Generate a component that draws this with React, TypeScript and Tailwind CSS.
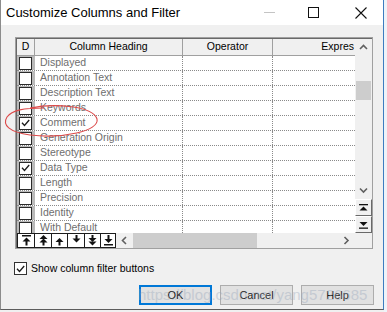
import React from 'react';

const rows: [string, boolean][] = [
  ['Displayed', false],
  ['Annotation Text', false],
  ['Description Text', false],
  ['Keywords', false],
  ['Comment', true],
  ['Generation Origin', false],
  ['Stereotype', false],
  ['Data Type', true],
  ['Length', false],
  ['Precision', false],
  ['Identity', false],
  ['With Default', false],
];

function Tick() {
  return (
    <svg width="9" height="8" viewBox="0 0 9 8">
      <path d="M1 3.8 L3.5 6.5 L8.2 1" stroke="#1a1a1a" strokeWidth="1.3" fill="none" />
    </svg>
  );
}

function Chevron({ dir }: { dir: 'up' | 'down' | 'left' | 'right' }) {
  const d = {
    up: 'M1 5 L4.5 1.5 L8 5',
    down: 'M1 1.5 L4.5 5 L8 1.5',
    left: 'M5 1 L1.5 4.5 L5 8',
    right: 'M1.5 1 L5 4.5 L1.5 8',
  }[dir];
  const vert = dir === 'up' || dir === 'down';
  return (
    <svg width={vert ? 9 : 7} height={vert ? 7 : 9} viewBox={vert ? '0 0 9 7' : '0 0 7 9'}>
      <path d={d} stroke="#606060" strokeWidth="1.6" fill="none" />
    </svg>
  );
}

// toolbar arrows: top, double up, up, down, double down, bottom
function MoveIcon({ kind }: { kind: number }) {
  const shapes: Record<number, React.ReactNode> = {
    0: (
      <>
        <rect x="0" y="0" width="9" height="1.5" />
        <polygon points="4.5,2.5 0.5,6.5 8.5,6.5" />
        <rect x="3.5" y="6" width="2" height="4.5" />
      </>
    ),
    1: (
      <>
        <polygon points="4.5,0 0.5,4 8.5,4" />
        <polygon points="4.5,3.5 0.5,7.5 8.5,7.5" />
        <rect x="3.5" y="7" width="2" height="3.5" />
      </>
    ),
    2: (
      <>
        <polygon points="4.5,3 0.5,7 8.5,7" />
        <rect x="3.5" y="6.5" width="2" height="4" />
      </>
    ),
    3: (
      <>
        <rect x="3.5" y="0" width="2" height="4" />
        <polygon points="4.5,7.5 0.5,3.5 8.5,3.5" />
      </>
    ),
    4: (
      <>
        <rect x="3.5" y="0" width="2" height="3.5" />
        <polygon points="4.5,7 0.5,3 8.5,3" />
        <polygon points="4.5,10.5 0.5,6.5 8.5,6.5" />
      </>
    ),
    5: (
      <>
        <rect x="3.5" y="0" width="2" height="4.5" />
        <polygon points="4.5,8 0.5,4 8.5,4" />
        <rect x="0" y="9" width="9" height="1.5" />
      </>
    ),
  };
  return (
    <svg width="9" height="11" viewBox="0 0 9 11" fill="#111">
      {shapes[kind]}
    </svg>
  );
}

export default function App() {
  return (
    <div className="relative flex h-[312px] w-[387px] overflow-hidden bg-[#f0f0f0] font-['Liberation_Sans',Arial,sans-serif] text-black">
      <div className="flex h-[310px] w-[384px] flex-col border-b border-l border-r border-b-[#5c5c5c] border-l-[#8c8c8c] border-r-[#3d7cc0] bg-[#f0f0f0]">
        {/* title bar */}
        <div className="flex h-[25px] items-center bg-white pl-[5px]">
          <span className="text-[13px] leading-none">Customize Columns and Filter</span>
          <div className="ml-auto flex items-center">
            <div className="mr-[33px] h-px w-[11px] bg-[#c4c4c4]" />
            <div className="mr-[36px] h-[11px] w-[11px] border border-[#111]" />
            <svg width="12" height="12" viewBox="0 0 12 12" className="mr-[16px]">
              <path d="M0.5 0.5 L11.5 11.5 M11.5 0.5 L0.5 11.5" stroke="#111" strokeWidth="1.1" />
            </svg>
          </div>
        </div>

        {/* grid */}
        <div className="ml-[14px] mt-[12px] w-[358px] border border-[#a0a0a0]">
          <div className="flex flex-col border-l border-t border-[#696969] text-[10.5px]">
            <div className="flex h-[194px]">
              <div className="flex w-[338px] flex-col overflow-hidden bg-white">
                <div className="flex h-[17px] shrink-0 items-center border-b border-[#a0a0a0] bg-[#f0f0f0]">
                  <div className="flex h-full w-[18px] items-center justify-center border-r border-[#a0a0a0]">D</div>
                  <div className="flex h-full w-[148px] items-center justify-center border-r border-[#a0a0a0]">Column Heading</div>
                  <div className="flex h-full w-[90px] items-center justify-center border-r border-[#a0a0a0]">Operator</div>
                  <div className="flex h-full w-[82px] items-center justify-end pr-[1px]">Expres</div>
                </div>
                {rows.map(([label, checked]) => (
                  <div key={label} className="flex h-[15px] shrink-0 border-b border-dotted border-[#8a8a8a]">
                    <div className="flex w-[18px] items-center bg-[#b9b9b9] pl-[2px]">
                      <div className="flex h-[13px] w-[13px] items-center justify-center border border-[#2a2a2a] bg-white">
                        {checked && <Tick />}
                      </div>
                    </div>
                    <div className="flex w-[148px] items-center border-r border-dotted border-[#8a8a8a] pl-[5px] text-[#6e6e6e]">
                      {label}
                    </div>
                    <div className="w-[90px] border-r border-dotted border-[#8a8a8a]" />
                    <div className="w-[82px]" />
                  </div>
                ))}
              </div>
              {/* vertical scrollbar */}
              <div className="flex w-[17px] flex-col bg-[#f0f0f0]">
                <div className="flex h-[160px] flex-col">
                  <div className="flex h-[17px] items-center justify-center">
                    <Chevron dir="up" />
                  </div>
                  <div className="ml-px mt-[25px] h-[19px] w-[15px] bg-[#cdcdcd]" />
                  <div className="mt-auto flex h-[17px] items-center justify-center">
                    <Chevron dir="down" />
                  </div>
                </div>
                <div className="flex h-[17px] items-center justify-center border-b border-r border-l border-t border-b-[#696969] border-l-white border-r-[#696969] border-t-white">
                  <svg width="9" height="8" viewBox="0 0 9 8" fill="#111">
                    <rect x="0" y="0" width="9" height="1.3" />
                    <polygon points="4.5,2.5 0.5,6.5 8.5,6.5" />
                  </svg>
                </div>
                <div className="flex h-[17px] items-center justify-center border-b border-r border-l border-t border-b-[#696969] border-l-white border-r-[#696969] border-t-white">
                  <svg width="9" height="8" viewBox="0 0 9 8" fill="#111">
                    <polygon points="4.5,5 0.5,1 8.5,1" />
                    <rect x="0" y="6.5" width="9" height="1.3" />
                  </svg>
                </div>
              </div>
            </div>
            {/* bottom: move buttons + horizontal scrollbar */}
            <div className="flex h-[15px]">
              <div className="flex border border-[#1c1c1c] bg-white">
                {[17, 17, 16, 17, 16, 14].map((w, i) => (
                  <div
                    key={i}
                    style={{ width: w }}
                    className="flex items-center justify-center border-r border-[#1c1c1c] last:border-r-0"
                  >
                    <MoveIcon kind={i} />
                  </div>
                ))}
              </div>
              <div className="flex w-[239px] items-center bg-[#f0f0f0]">
                <div className="flex w-[17px] justify-center">
                  <Chevron dir="left" />
                </div>
                <div className="h-full w-[124px] bg-[#cdcdcd]" />
                <div className="ml-auto flex w-[17px] justify-center">
                  <Chevron dir="right" />
                </div>
              </div>
              <div className="w-[17px] bg-[#f0f0f0]" />
            </div>
          </div>
        </div>

        {/* show filter buttons */}
        <div className="ml-[13px] mt-[13px] flex h-[13px] items-center gap-[4px]">
          <div className="flex h-[13px] w-[13px] items-center justify-center border border-[#333] bg-white">
            <Tick />
          </div>
          <span className="text-[10.5px]">Show column filter buttons</span>
        </div>

        {/* dialog buttons */}
        <div className="ml-auto mr-[9px] mt-[10px] flex gap-[8px] text-[11px] text-[#222]">
          <div className="flex h-[20px] w-[73px] items-center justify-center border-2 border-[#0078d7] bg-[#e1e1e1]">OK</div>
          <div className="flex h-[20px] w-[73px] items-center justify-center border border-[#adadad] bg-[#e1e1e1]">Cancel</div>
          <div className="flex h-[20px] w-[73px] items-center justify-center border border-[#adadad] bg-[#e1e1e1]">Help</div>
        </div>
      </div>
      <div className="h-full flex-1 bg-[#eef3f9]" />

      {/* red hand-drawn annotation */}
      <svg className="pointer-events-none absolute left-0 top-0" width="387" height="312" viewBox="0 0 387 312">
        <path
          d="M30 108 C55 103, 93 106, 97 119 C100 131, 62 139, 30 135 C9 132, 2 125, 7 117 C12 110, 24 108, 44 108"
          stroke="#dc4a4a"
          strokeWidth="1.1"
          fill="none"
        />
      </svg>

      {/* faint watermark */}
      <div className="pointer-events-none absolute left-[138px] top-[287px] text-[15px] leading-none text-[#9aa8bc] opacity-40">
        https://blog.csdn.net/yang5726685
      </div>
    </div>
  );
}
